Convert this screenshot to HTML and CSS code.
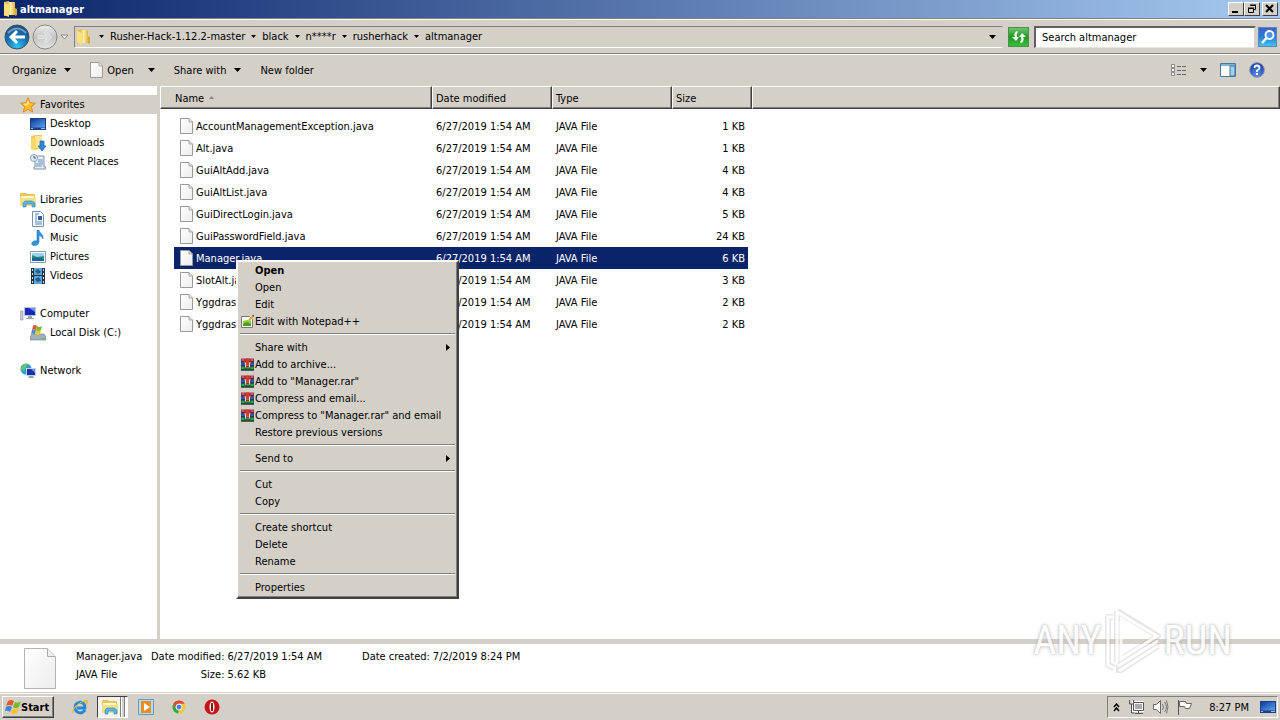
FILE: index.html
```html
<!DOCTYPE html>
<html lang="en">
<head>
<meta charset="UTF-8">
<meta name="viewport" content="width=device-width, initial-scale=1.0">
<title>altmanager</title>
<link rel="stylesheet" href="styles.css">
</head>
<body>
<!-- shared icons -->
<svg class="defs" aria-hidden="true">
  <defs>
    <linearGradient id="gPage" x1="0" y1="0" x2="1" y2="1"><stop offset="0" stop-color="#fff"/><stop offset="1" stop-color="#ececec"/></linearGradient>
    <linearGradient id="gFolder" x1="0" x2="1"><stop offset="0" stop-color="#e3b93c"/><stop offset=".45" stop-color="#fff0a8"/><stop offset="1" stop-color="#dfb53e"/></linearGradient>
    <linearGradient id="gScreen" x1="0" y1="0" x2="1" y2="1"><stop offset="0" stop-color="#0d3a9c"/><stop offset="1" stop-color="#5aa4ee"/></linearGradient>
    <radialGradient id="gBack" cx=".5" cy=".9" r=".9"><stop offset="0" stop-color="#35c3f3"/><stop offset=".5" stop-color="#1673b4"/><stop offset="1" stop-color="#1c4c80"/></radialGradient>
    <linearGradient id="gFwd" x1="0" y1="0" x2="0" y2="1"><stop offset="0" stop-color="#efefef"/><stop offset=".5" stop-color="#c2c2c2"/><stop offset="1" stop-color="#e6e6e6"/></linearGradient>
    <radialGradient id="gHelp" cx=".5" cy=".8" r=".8"><stop offset="0" stop-color="#5b8ff0"/><stop offset="1" stop-color="#16389e"/></radialGradient>
  </defs>
  <symbol id="down" viewBox="0 0 7 4"><path d="M0 0h7L3.500 4z"/></symbol>
  <symbol id="page" viewBox="0 0 13 16"><path d="M.5.5h8.500l3.500 3.500v11.500H.5z" fill="url(#gPage)" stroke="#9a9a9a"/><path d="M9 .5V4h3.500" fill="#ddd" stroke="#aaa"/></symbol>
  <symbol id="folder" viewBox="0 0 16 16"><path d="M2 1l5-1v14l-5 1z" fill="#e9c247"/><path d="M5 1h8v13H5z" fill="url(#gFolder)"/><path d="M2 2l5 2v12l-5-2z" fill="#f8e17b"/><path d="M13 7l2 1v6l-2 1z" fill="#d2a838"/></symbol>
  <symbol id="star" viewBox="0 0 16 16"><path d="M8 .8l2.200 4.900 5.200.5-4 3.500 1.300 5.400L8 12.300l-4.700 2.800 1.300-5.400-4-3.500 5.200-.5z" fill="#fdbf2d" stroke="#e58a1f"/><path d="M8 3l1.300 3.500L6 9 3 7l3.500-.5z" fill="#ffe57d"/></symbol>
  <symbol id="desktop" viewBox="0 0 16 16"><path d="M0 2h16v12H0z" fill="#1c3f7e"/><path d="M1 3h14v8.500H1z" fill="url(#gScreen)"/><path d="M1 12h2v1H1zM11 12h4v1h-4z" fill="#8cc2f5"/></symbol>
  <symbol id="downloads" viewBox="0 0 16 16"><path d="M1 1l5-1h6v13l-7 2-4-1z" fill="#eac757"/><path d="M5 1h7v12H5z" fill="#f9e597"/><path d="M1 2l5 1.500V15l-5-1z" fill="#f5d869"/><path d="M10 6h4v5h2l-4 5-4-5h2z" fill="#2d86d9" stroke="#1763ad" stroke-width=".7"/></symbol>
  <symbol id="recent" viewBox="0 0 16 16"><path d="M5 2h9v11h2v2H4v-2h1z" fill="#e7eef5" stroke="#7f93a8"/><path d="M8 6h5M8 8h5M6 10h7M6 12h6" stroke="#6993bd"/><circle cx="4" cy="4" r="3.500" fill="#dfeaf3" stroke="#8da3b4"/><path d="M4 2v2h2" fill="none" stroke="#35597b"/></symbol>
  <symbol id="library" viewBox="0 0 16 16"><path d="M0 2l1-1h5l1 1h8v12H0z" fill="#e9c658"/><path d="M1 4h13v2H1z" fill="#fff8cf"/><path d="M0 6h16v8H0z" fill="#f7df82"/><path d="M3 15v-4l2-2h7l3 2v4h-3v-3H6v3z" fill="#58b5e8" stroke="#2f83bf" stroke-width=".6"/></symbol>
  <symbol id="documents" viewBox="0 0 16 16"><path d="M2.500.5h8l3 3v12h-11z" fill="#f8fbff" stroke="#7691ae"/><path d="M5 3h4M5 5h2M5 11h7M5 13h7" stroke="#5c83ad"/><path d="M8 5h4v4H8z" fill="#2a5fa2"/><path d="M5 7h2M5 9h2" stroke="#5c83ad"/></symbol>
  <symbol id="music" viewBox="0 0 16 16"><path d="M7 0h2c0 3 5 4 4 9-.5-2-2-3-4-3.500V12c0 2-2 3.500-4.500 3.500S1 14 2 12.500 5 10.500 7 11z" fill="#2f93dd" stroke="#1d6cb4" stroke-width=".5"/></symbol>
  <symbol id="pictures" viewBox="0 0 16 16"><path d="M.5 2.500h15v11H.5z" fill="#fff" stroke="#8a99a8"/><path d="M2 4h12v4H2z" fill="#9bd3f5"/><path d="M2 6l5 2 7-1v5H2z" fill="#2a9078"/><path d="M2 9c5-1 8 0 12 1v2H2z" fill="#1b6799"/></symbol>
  <symbol id="videos" viewBox="0 0 16 16"><path d="M1 0h14v16H1z" fill="#27323f"/><path d="M4 0h8v7H4zM4 8h8v8H4z" fill="#57a6d4"/><path d="M5 3l3-2 3 3-3 2zM5 11l4-2 2 4-4 1z" fill="#245b91"/><path d="M2.500 1v15M13.500 1v15" stroke="#d4dce4" stroke-dasharray="2 2"/></symbol>
  <symbol id="computer" viewBox="0 0 16 16"><path d="M0 5h3v9H0z" fill="#c7cbd4" stroke="#8b909c" stroke-width=".6"/><path d="M4 1h12v9H4z" fill="#b9c2d8"/><path d="M5 2h10v7H5z" fill="#1928b6"/><path d="M9 2h6v4z" fill="#6c8cf0"/><path d="M8 10h4v2h2v1H6v-1h2z" fill="#9aa1ad"/></symbol>
  <symbol id="disk" viewBox="0 0 16 16"><path d="M2 9h12l2 3v3H0v-3z" fill="#9fb0b7" stroke="#6d7f88" stroke-width=".6"/><path d="M11 13h4v1h-4z" fill="#4fcf57"/><path d="M3 1q2-2 4 0L6 5q-2-1-4 0z" fill="#e8582a"/><path d="M7 1q2 2 5 0l-1 4q-2 2-5 0z" fill="#79b82f"/><path d="M2 5q2-1 4 0l-1 4q-2-1-4 0z" fill="#3d8fdd"/><path d="M6 5q2 2 5 0l-1 4q-2 2-5 0z" fill="#f7c52e"/></symbol>
  <symbol id="network" viewBox="0 0 16 16"><circle cx="6" cy="6" r="5.500" fill="#2e9ad2"/><path d="M2 3q3-3 6-2L6 4 4 8 1 7zM7 6l4 1-3 4z" fill="#67c46a"/><path d="M6 5h10v8H6z" fill="#cbd2e0"/><path d="M7 6h8v6H7z" fill="#1831ad"/><path d="M11 6h4v4z" fill="#6b90ee"/><path d="M9 13h4l1 2H8z" fill="#9aa1ad"/></symbol>
  <symbol id="notepad" viewBox="0 0 13 13"><path d="M.5 1.500h8l3 3v8H.5z" fill="#fafaf2" stroke="#777"/><path d="M2 6l4-1 4 1v5H2z" fill="#8fcf36"/><path d="M2 9l4-2 4 2v2H2z" fill="#4c9c22"/><path d="M7 5l5-5 1 1-4 5z" fill="#e6a33c"/><path d="M11 0h2v2z" fill="#8c2f10"/></symbol>
  <symbol id="rar" viewBox="0 0 13 12"><path d="M0 0h13v4H0z" fill="#a92f4e"/><path d="M0 4h13v4H0z" fill="#2957b5"/><path d="M0 8h13v4H0z" fill="#1c7e35"/><path d="M0 3h13v1H0zM0 7h13v1H0zM0 11h13v1H0z" fill="#191f3d"/><path d="M1 1h2v1H1zM10 1h2v1h-2z" fill="#ee7d8c"/><path d="M1 9h2v1H1zM10 9h2v1h-2z" fill="#49d16a"/><path d="M5 0h3v3H5z" fill="#dc3a26"/><path d="M3 3h7v2H3z" fill="#b25a22"/><path d="M4 4h5v5H4z" fill="#ddd"/><path d="M5 3h3v4H5z" fill="#dc3a26"/><path d="M5 7h3v2H5z" fill="#8a3a1a"/></symbol>
  <symbol id="flag" viewBox="0 0 16 16"><path d="M3 2q3-2 6 0L7 7Q4 5 1 7z" fill="#e8562a"/><path d="M10 3q3 2 6-1l-2 6q-3 2-6 0z" fill="#78b72f"/><path d="M1 8q3-2 6 0l-2 5q-2-2-5-1z" fill="#3a86da"/><path d="M8 9q3 2 6 0l-2 5q-4 2-6 0z" fill="#f7c12b"/></symbol>
</svg>

<header class="title-bar">
  <svg class="icon"><use href="#folder"/></svg>
  <h1>altmanager</h1>
  <div class="window-buttons">
    <button type="button" aria-label="Minimize"><svg width="10" height="10"><path d="M1 7h6v2H1z"/></svg></button>
    <button type="button" aria-label="Restore"><svg width="10" height="10"><path d="M3.500 1.500h5v4h-2M3 1h6" fill="none" stroke="#000"/><path d="M1.500 4.500h5v4h-5zM1 4h6" fill="none" stroke="#000"/></svg></button>
    <button type="button" class="close" aria-label="Close"><svg width="10" height="10"><path d="M1 1l7 7M8 1L1 8" stroke="#000" stroke-width="2"/></svg></button>
  </div>
</header>

<nav class="nav-bar">
  <button type="button" class="round" aria-label="Back"><svg width="26" height="26" viewBox="0 0 26 26"><circle cx="13" cy="13" r="12" fill="url(#gBack)" stroke="#39536f"/><path d="M4 9q9-9 18 0" fill="none" stroke="#9fc7e6" stroke-width="2" opacity=".6"/><path d="M5 13l7-7 2 2-3 3.500h10v3H11l3 3.500-2 2z" fill="#fff"/></svg></button>
  <button type="button" class="round" aria-label="Forward"><svg width="26" height="26" viewBox="0 0 26 26"><circle cx="13" cy="13" r="12" fill="url(#gFwd)" stroke="#868686"/><path d="M20 13l-6-6-2 2 3 2.500H6v3h9L12 17l2 2z" fill="#d8d8d8" stroke="#eee" stroke-width=".6"/></svg></button>
  <button type="button" class="recent-pages" aria-label="Recent pages"><svg width="9" height="6"><path d="M1 1h7L4.500 5z" fill="#eee" stroke="#888"/></svg></button>
  <div class="address">
    <svg class="icon"><use href="#folder"/></svg>
    <svg class="arrow"><use href="#down"/></svg><a href="#">Rusher-Hack-1.12.2-master</a>
    <svg class="arrow"><use href="#down"/></svg><a href="#">black</a>
    <svg class="arrow"><use href="#down"/></svg><a href="#">n****r</a>
    <svg class="arrow"><use href="#down"/></svg><a href="#">rusherhack</a>
    <svg class="arrow"><use href="#down"/></svg><a href="#">altmanager</a>
    <button type="button" class="history" aria-label="Previous locations"><svg width="7" height="4"><use href="#down"/></svg></button>
  </div>
  <button type="button" class="refresh" aria-label="Refresh"><svg width="18" height="18" viewBox="0 0 18 18"><path d="M7 3Q3 5 5 9H2l4 4 3-4H7Q6 6 8 4zM11 15q4-2 2-6h3l-4-4-3 4h2q1 3-1 5z" fill="#fff"/></svg></button>
  <div class="search">
    <input type="text" aria-label="Search" value="Search altmanager">
    <button type="button" aria-label="Search"><svg width="16" height="16" viewBox="0 0 16 16"><circle cx="9.500" cy="6" r="4" fill="#4e93e6" stroke="#fff" stroke-width="2"/><path d="M6.500 9L2 14" stroke="#fff" stroke-width="2.500"/></svg></button>
  </div>
</nav>

<div class="toolbar">
  <button type="button">Organize <svg class="arrow"><use href="#down"/></svg></button>
  <button type="button" class="open"><svg class="page"><use href="#page"/></svg><span>Open</span> <svg class="arrow far"><use href="#down"/></svg></button>
  <button type="button">Share with <svg class="arrow"><use href="#down"/></svg></button>
  <button type="button">New folder</button>
  <div class="views">
    <button type="button" aria-label="Change view"><svg width="16" height="13"><path d="M.5.5h3v3h-3zM.5 4.500h3v3h-3zM.5 8.500h3v3h-3z" fill="#fff" stroke="#888"/><path d="M6 2.500h4M11 2.500h4M6 6.500h4M11 6.500h4M6 10.500h4M11 10.500h4" stroke="#667"/></svg></button>
    <button type="button" aria-label="More view options"><svg class="arrow"><use href="#down"/></svg></button>
    <button type="button" class="preview" aria-label="Show preview pane"><svg width="16" height="14"><path d="M.5.5h15v13H.5z" fill="#fff" stroke="#47749b"/><path d="M1 1h14v2H1z" fill="#7fb2d6"/><path d="M10 3h5v10h-5z" fill="#9cd4ec" stroke="#47749b"/></svg></button>
    <button type="button" aria-label="Help"><svg width="16" height="16" viewBox="0 0 16 16"><circle cx="8" cy="8" r="7.300" fill="url(#gHelp)" stroke="#8491ac"/><path d="M5.500 6Q5.500 3.500 8 3.500T10.500 6Q10.500 7 8 8.500V10" fill="none" stroke="#fff" stroke-width="1.800"/><path d="M7 11h2v2H7z" fill="#fff"/></svg></button>
  </div>
</div>

<main class="content">
  <aside class="sidebar">
    <ul>
      <li class="root current"><a href="#"><svg class="icon"><use href="#star"/></svg>Favorites</a></li>
      <li><a href="#"><svg class="icon"><use href="#desktop"/></svg>Desktop</a></li>
      <li><a href="#"><svg class="icon"><use href="#downloads"/></svg>Downloads</a></li>
      <li><a href="#"><svg class="icon"><use href="#recent"/></svg>Recent Places</a></li>
    </ul>
    <ul>
      <li class="root"><a href="#"><svg class="icon"><use href="#library"/></svg>Libraries</a></li>
      <li><a href="#"><svg class="icon"><use href="#documents"/></svg>Documents</a></li>
      <li><a href="#"><svg class="icon"><use href="#music"/></svg>Music</a></li>
      <li><a href="#"><svg class="icon"><use href="#pictures"/></svg>Pictures</a></li>
      <li><a href="#"><svg class="icon"><use href="#videos"/></svg>Videos</a></li>
    </ul>
    <ul>
      <li class="root"><a href="#"><svg class="icon"><use href="#computer"/></svg>Computer</a></li>
      <li><a href="#"><svg class="icon"><use href="#disk"/></svg>Local Disk (C:)</a></li>
    </ul>
    <ul>
      <li class="root"><a href="#"><svg class="icon"><use href="#network"/></svg>Network</a></li>
    </ul>
  </aside>

  <section class="files">
    <table>
      <colgroup><col class="col-name"><col class="col-date"><col class="col-type"><col class="col-size"><col></colgroup>
      <thead>
        <tr><th>Name <svg class="sort" width="5" height="3"><path d="M0 3h5L2.500 0z" fill="#888"/></svg></th><th>Date modified</th><th>Type</th><th>Size</th><th></th></tr>
      </thead>
      <tbody>
        <tr><td><svg class="page"><use href="#page"/></svg>AccountManagementException.java</td><td>6/27/2019 1:54 AM</td><td>JAVA File</td><td>1 KB</td><td></td></tr>
        <tr><td><svg class="page"><use href="#page"/></svg>Alt.java</td><td>6/27/2019 1:54 AM</td><td>JAVA File</td><td>1 KB</td><td></td></tr>
        <tr><td><svg class="page"><use href="#page"/></svg>GuiAltAdd.java</td><td>6/27/2019 1:54 AM</td><td>JAVA File</td><td>4 KB</td><td></td></tr>
        <tr><td><svg class="page"><use href="#page"/></svg>GuiAltList.java</td><td>6/27/2019 1:54 AM</td><td>JAVA File</td><td>4 KB</td><td></td></tr>
        <tr><td><svg class="page"><use href="#page"/></svg>GuiDirectLogin.java</td><td>6/27/2019 1:54 AM</td><td>JAVA File</td><td>5 KB</td><td></td></tr>
        <tr><td><svg class="page"><use href="#page"/></svg>GuiPasswordField.java</td><td>6/27/2019 1:54 AM</td><td>JAVA File</td><td>24 KB</td><td></td></tr>
        <tr class="selected"><td><svg class="page"><use href="#page"/></svg>Manager.java</td><td>6/27/2019 1:54 AM</td><td>JAVA File</td><td>6 KB</td><td></td></tr>
        <tr><td><svg class="page"><use href="#page"/></svg>SlotAlt.java</td><td>6/27/2019 1:54 AM</td><td>JAVA File</td><td>3 KB</td><td></td></tr>
        <tr><td><svg class="page"><use href="#page"/></svg>Yggdras</td><td>6/27/2019 1:54 AM</td><td>JAVA File</td><td>2 KB</td><td></td></tr>
        <tr><td><svg class="page"><use href="#page"/></svg>Yggdras</td><td>6/27/2019 1:54 AM</td><td>JAVA File</td><td>2 KB</td><td></td></tr>
      </tbody>
    </table>
  </section>
</main>

<section class="details">
  <svg class="big-page" viewBox="0 0 32 41"><path d="M.5.5h23l8 8v32H.5z" fill="url(#gPage)" stroke="#b4b4b4"/><path d="M23.500.5v8h8" fill="#eee" stroke="#aaa"/></svg>
  <div class="detail-name"><p>Manager.java</p><p>JAVA File</p></div>
  <dl>
    <dt>Date modified:</dt><dd>6/27/2019 1:54 AM</dd>
    <dt>Size:</dt><dd>5.62 KB</dd>
  </dl>
  <dl class="created">
    <dt>Date created:</dt><dd>7/2/2019 8:24 PM</dd>
  </dl>
</section>

<footer class="taskbar">
  <button type="button" class="start"><svg class="icon"><use href="#flag"/></svg>Start</button>
  <div class="quick">
    <button type="button" aria-label="Internet Explorer"><svg width="18" height="18" viewBox="0 0 18 18"><path d="M14 12Q12 15 9 15 4 14 4 9.500T9 4q5 .5 5 6H6" fill="none" stroke="#2388d8" stroke-width="2.800"/><path d="M2 16Q-1 12 7 6T17 3q1 2-2 5 1-3 0-4-3-1-8 3T2 16z" fill="#f0b92e"/></svg></button>
    <button type="button" class="active" aria-label="Windows Explorer"><svg class="icon"><use href="#library"/></svg></button>
    <button type="button" class="wmp" aria-label="Media Player"><svg width="16" height="16"><path d="M.5.5h15v15H.5z" fill="#b8daf2" stroke="#5e9bc9"/><path d="M3 2h10v12H3z" fill="#f08a1c"/><path d="M6 4l6 4-6 4z" fill="#fff"/></svg></button>
    <button type="button" aria-label="Chrome"><svg width="14" height="14" viewBox="0 0 14 14"><circle cx="7" cy="7" r="6.500" fill="#f6c62d"/><path d="M1.400 3.700A6.500 6.500 0 0 1 12.600 3.700H7L4 8z" fill="#e04536"/><path d="M1.400 3.700L4.500 9 7 10.500 6 13.500A6.500 6.500 0 0 1 1.400 3.700z" fill="#34a650"/><circle cx="7" cy="7" r="3" fill="#4285e8" stroke="#fff"/></svg></button>
    <button type="button" aria-label="Opera"><svg width="16" height="16"><circle cx="8" cy="8" r="7.500" fill="#c3161c"/><ellipse cx="8" cy="8" rx="2.500" ry="5.500" fill="#fff"/><path d="M7 4h2v8H7z" fill="#9c1116"/></svg></button>
  </div>
  <div class="tray">
    <button type="button" aria-label="Show hidden icons"><svg width="7" height="9"><path d="M1 4l2.500-3L6 4M1 8l2.500-3L6 8" fill="none" stroke="#000" stroke-width="1.500"/></svg></button>
    <svg width="16" height="16"><path d="M5.500 3.500h10v8h-10z" fill="#aaa" stroke="#fff" stroke-width="3"/><path d="M5.500 3.500h10v8h-10zM7 14.500h8M10.500 12v2M1.500 1v4h4V1M3.500 5v9h3" fill="none" stroke="#555"/></svg>
    <svg width="17" height="16"><path d="M1.500 5.500h3l4-4v13l-4-4h-3z" fill="#fff" stroke="#666"/><path d="M10.500 5q2 3 0 6M12.500 3q4 5 0 10M14.500 1.500q3 6 0 13" fill="none" stroke="#777"/></svg>
    <svg width="16" height="16"><path d="M1.500 1v15" stroke="#555"/><path d="M2.500 2.500h6l1 2h5l-2 5h-4l-1-2h-5z" fill="#fff" stroke="#666"/></svg>
    <time>8:27 PM</time>
    <button type="button" aria-label="Show desktop"><svg class="icon"><use href="#desktop"/></svg></button>
  </div>
</footer>

<menu class="context-menu">
  <li><button type="button" class="default">Open</button></li>
  <li><button type="button">Open</button></li>
  <li><button type="button">Edit</button></li>
  <li><button type="button" class="with-icon"><svg><use href="#notepad"/></svg>Edit with Notepad++</button></li>
  <li class="separator"></li>
  <li><button type="button" class="submenu">Share with<svg><path d="M0 0l4 3.500L0 7z"/></svg></button></li>
  <li><button type="button" class="with-icon"><svg><use href="#rar"/></svg>Add to archive...</button></li>
  <li><button type="button" class="with-icon"><svg><use href="#rar"/></svg>Add to "Manager.rar"</button></li>
  <li><button type="button" class="with-icon"><svg><use href="#rar"/></svg>Compress and email...</button></li>
  <li><button type="button" class="with-icon"><svg><use href="#rar"/></svg>Compress to "Manager.rar" and email</button></li>
  <li><button type="button">Restore previous versions</button></li>
  <li class="separator"></li>
  <li><button type="button" class="submenu">Send to<svg><path d="M0 0l4 3.500L0 7z"/></svg></button></li>
  <li class="separator"></li>
  <li><button type="button">Cut</button></li>
  <li><button type="button">Copy</button></li>
  <li class="separator"></li>
  <li><button type="button">Create shortcut</button></li>
  <li><button type="button">Delete</button></li>
  <li><button type="button">Rename</button></li>
  <li class="separator"></li>
  <li><button type="button">Properties</button></li>
</menu>

<div class="watermark">
  <span>ANY</span>
  <svg width="56" height="64" viewBox="0 0 56 64">
    <g fill="none" stroke="#999" stroke-width="6" stroke-linejoin="round" opacity=".3"><path d="M8 8H3v48l6 3M12 2v51M12 2l41 25L12 53"/><path d="M53 33L14 58v4L53 37"/></g>
    <g fill="none" stroke="#fff" stroke-width="3"><path d="M8 8H3v48l6 3M12 53V3l40 24-36 23V12"/><path d="M53 32L13 57M53 37L14 62"/></g>
  </svg>
  <span>RUN</span>
</div>
</body>
</html>
```
FILE: styles.css
```css
* {
  box-sizing: border-box;
}
body {
  margin: 0;
  height: 100vh;
  display: flex;
  flex-direction: column;
  overflow: hidden;
  position: relative;
  font-family: Tahoma, "DejaVu Sans Condensed", "Noto Sans", sans-serif;
  font-size: 11px;
  line-height: 17px;
  color: #000;
  background-color: #d4d0c8;
}
button {
  font: inherit;
  color: inherit;
  padding: 0;
  border: none;
  background: none;
  display: flex;
  align-items: center;
}
a {
  color: inherit;
  text-decoration: none;
}
ul, menu, dl, p {
  margin: 0;
  padding: 0;
  list-style: none;
}
svg {
  flex: none;
}
.defs {
  position: absolute;
  width: 0;
  height: 0;
}
.icon {
  width: 16px;
  height: 16px;
}
.page {
  width: 13px;
  height: 16px;
}
.arrow {
  width: 7px;
  height: 4px;
}

/* title bar */
.title-bar {
  display: flex;
  align-items: center;
  flex: none;
  height: 18px;
  padding: 0 2px;
  background: linear-gradient(to right, #0a246a, #a6caf0);
}
.title-bar h1 {
  margin: 0 0 0 2px;
  font-size: 11px;
  color: #fff;
}
.window-buttons {
  display: flex;
  margin-left: auto;
}
.window-buttons button {
  width: 16px;
  height: 14px;
  justify-content: center;
  background-color: #d4d0c8;
  border: 1px solid;
  border-color: #fff #404040 #404040 #fff;
}
.window-buttons .close {
  margin-left: 2px;
}

/* back / forward, address, search */
.nav-bar {
  display: flex;
  align-items: center;
  flex: none;
  height: 36px;
  padding: 1px 3px 0 4px;
  border-top: 1px solid #808080;
  border-bottom: 1px solid #808080;
  box-shadow: inset 0 1px #fff, 0 1px #fff;
}
.round {
  margin-right: 2px;
}
.recent-pages {
  margin-right: 5px;
}
.address {
  display: flex;
  align-items: center;
  flex: 1;
  height: 22px;
  border: 1px solid;
  border-color: #808080 #d4d0c8 #fff #808080;
}
.address .arrow {
  width: 5px;
  height: 3px;
  margin: 0 6px;
}
.address .icon + .arrow {
  margin-left: 8px;
}
.address .history {
  margin: 0 6px 0 auto;
}
.refresh {
  width: 21px;
  height: 20px;
  margin: 0 5px;
  justify-content: center;
  background: linear-gradient(#6cc36c, #219a21 50%, #3cbd3c);
  border: 1px solid #48934c;
}
.search {
  display: flex;
  align-items: center;
  gap: 2px;
  width: 243px;
}
.search input {
  flex: 1;
  min-width: 0;
  height: 22px;
  padding: 0 6px;
  font: inherit;
  border: 2px solid;
  border-color: #606060 #d4d0c8 #e8e6e0 #606060;
  border-bottom-width: 1px;
  background-color: #fff;
}
.search button {
  width: 19px;
  height: 20px;
  justify-content: center;
  background: linear-gradient(#3d60cc, #2b7bdc 50%, #43c4ef);
  border: 1px solid #5e84c0;
}

/* toolbar */
.toolbar {
  display: flex;
  align-items: center;
  flex: none;
  height: 32px;
  padding: 0 15px 0 12px;
}
.toolbar > button {
  gap: 8px;
  margin-right: 19px;
}
.toolbar .open {
  gap: 4px;
}
.toolbar .far {
  margin-left: 10px;
}
.views {
  display: flex;
  align-items: center;
  gap: 13px;
  margin-left: auto;
}

/* folder tree and file list */
.content {
  display: flex;
  flex: 1;
  min-height: 0;
  background-color: #fff;
}
.sidebar {
  width: 160px;
  flex: none;
  padding-top: 9px;
  border-right: 3px solid #d4d0c8;
}
.sidebar ul {
  margin-bottom: 19px;
}
.sidebar li {
  height: 19px;
  padding-left: 30px;
}
.sidebar .root {
  padding-left: 20px;
}
.sidebar .current {
  background-color: #d4d0c8;
}
.sidebar a {
  display: flex;
  align-items: center;
  gap: 4px;
  height: 19px;
}
.files {
  flex: 1;
  min-width: 0;
}
table {
  width: 100%;
  table-layout: fixed;
  border-collapse: separate;
  border-spacing: 0;
}
.col-name {
  width: 272px;
}
.col-date, .col-type {
  width: 120px;
}
.col-size {
  width: 80px;
}
th {
  height: 23px;
  padding: 1px 3px 0;
  text-align: left;
  font-weight: normal;
  background-color: #d4d0c8;
  border: 1px solid;
  border-color: #fff #404040 #404040 #fff;
  box-shadow: inset -1px -1px #808080;
}
th:first-child {
  padding-left: 14px;
}
.sort {
  margin-left: 2px;
  vertical-align: 3px;
}
tbody::before {
  content: "";
  display: block;
  height: 6px;
}
td {
  height: 22px;
  padding: 0 4px;
  white-space: nowrap;
}
td:first-child {
  padding-left: 6px;
  border-left: 14px solid #fff;
}
td:nth-child(4) {
  text-align: right;
  padding-right: 3px;
  border-right: 4px solid #fff;
}
td .page {
  margin-right: 3px;
  vertical-align: -4px;
}
.selected {
  color: #fff;
}
.selected td:not(:last-child) {
  background-color: #0a246a;
}

/* details pane */
.details {
  display: flex;
  flex: none;
  height: 54px;
  padding: 4px 24px 0;
  line-height: 18px;
  background-color: #fff;
  border-top: 5px solid #d4d0c8;
  border-bottom: 1px solid #d4d0c8;
}
.big-page {
  width: 32px;
  height: 41px;
  margin-right: 20px;
}
.detail-name {
  width: 75px;
  white-space: nowrap;
}
.details dl {
  display: grid;
  grid-template-columns: auto auto;
  grid-auto-rows: 18px;
  column-gap: 3px;
}
.details dt {
  text-align: right;
}
.details dd {
  margin: 0;
}
.details .created {
  margin-left: 40px;
}

/* taskbar */
.taskbar {
  display: flex;
  align-items: center;
  flex: none;
  height: 27px;
  padding: 0 2px;
  border-top: 1px solid #fff;
}
.start {
  height: 22px;
  width: 52px;
  padding-left: 2px;
  font-weight: bold;
  border: 1px solid;
  border-color: #fff #404040 #404040 #fff;
  box-shadow: inset -1px -1px #808080;
}
.quick {
  display: flex;
  align-items: center;
  gap: 18px;
  margin-left: 17px;
}
.quick .active {
  width: 31px;
  height: 22px;
  margin: 0 -8px 0 -10px;
  padding-left: 4px;
  background: linear-gradient(to right, #f4f3f0 22px, #808080 22px, #808080 23px, #fff 23px, #fff 24px, #d4d0c8 24px, #d4d0c8 26px, #808080 26px, #808080 27px, #fff 27px);
  border: 1px solid;
  border-color: #404040 #fff #fff #404040;
}
.tray {
  display: flex;
  align-items: center;
  gap: 8px;
  height: 22px;
  margin-left: auto;
  padding: 0 1px 0 5px;
  border: 1px solid;
  border-color: #808080 #fff #fff #808080;
}
.tray time {
  margin: 0 3px 0 8px;
}

/* right-click menu */
.context-menu {
  position: absolute;
  left: 236px;
  top: 260px;
  width: 223px;
  padding: 0 1px 1px;
  background-color: #d4d0c8;
  border: 2px solid;
  border-color: #fff #404040 #404040 #fff;
  box-shadow: inset -1px -1px #808080;
}
.context-menu button {
  width: 100%;
  height: 17px;
  padding: 0 6px 0 16px;
}
.context-menu .with-icon {
  padding-left: 2px;
  gap: 1px;
}
.context-menu .with-icon svg {
  width: 13px;
  height: 13px;
}
.context-menu .default {
  font-weight: bold;
}
.context-menu .submenu {
  justify-content: space-between;
}
.context-menu .submenu svg {
  width: 4px;
  height: 7px;
}
.separator {
  height: 2px;
  margin: 3px 1px 4px;
  border-top: 1px solid #808080;
  border-bottom: 1px solid #fff;
}

/* logo over the lower right corner */
.watermark {
  position: absolute;
  right: 48px;
  bottom: 47px;
  display: flex;
  align-items: center;
  gap: 3px;
  font-family: "Roboto Condensed", "Open Sans Condensed", "Liberation Sans Narrow", "Liberation Sans", sans-serif;
  font-size: 40px;
  line-height: 64px;
  color: #fff;
  text-shadow: 0 0 2px #aaa, 0 0 4px #bbb;
  opacity: 0.8;
}
```
